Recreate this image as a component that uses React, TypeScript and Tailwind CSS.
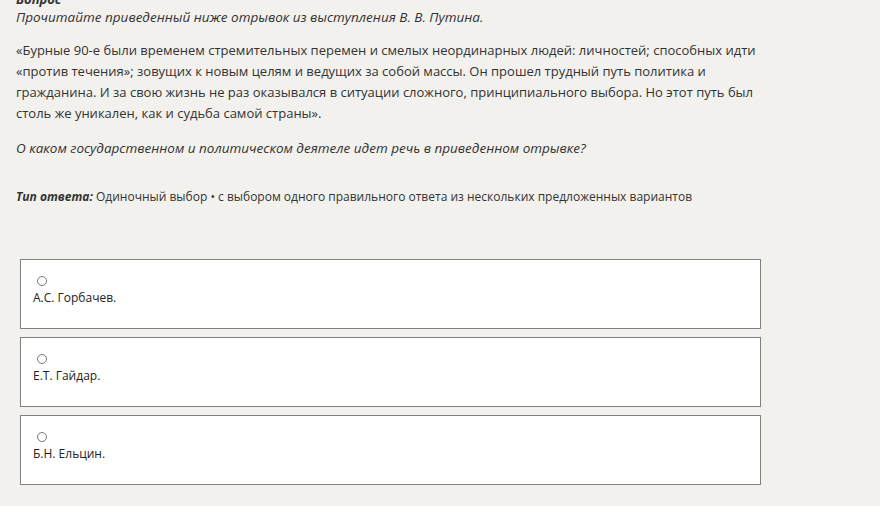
const options = ["А.С. Горбачев.", "Е.Т. Гайдар.", "Б.Н. Ельцин."];

export default function App() {
  return (
    <div
      className="w-[880px] h-[506px] overflow-hidden bg-[#f2f1ee] text-[#333333] text-[13px] leading-[21px]"
      style={{ fontFamily: '"Open Sans", "Noto Sans", sans-serif' }}
    >
      <div className="pl-[16px] -mt-[11px]">
        <div className="italic font-bold">Вопрос</div>
        <div className="italic text-[13.5px] mt-[-3px]">
          Прочитайте приведенный ниже отрывок из выступления В. В. Путина.
        </div>

        <p className="mt-[12px] w-[750px]">
          «Бурные 90-е были временем стремительных перемен и смелых неординарных
          людей: личностей; способных идти «против течения»; зовущих к новым
          целям и ведущих за собой массы. Он прошел трудный путь политика и
          гражданина. И за свою жизнь не раз оказывался в ситуации сложного,
          принципиального выбора. Но этот путь был столь же уникален, как и
          судьба самой страны».
        </p>

        <p className="mt-[14px] italic text-[13.5px]">
          О каком государственном и политическом деятеле идет речь в
          приведенном отрывке?
        </p>

        <p className="mt-[27px] text-[12px]">
          <span className="italic font-bold">Тип ответа:</span> Одиночный выбор
          • с выбором одного правильного ответа из нескольких предложенных
          вариантов
        </p>
      </div>

      <div className="ml-[20px] mt-[52px] w-[741px] flex flex-col gap-[8px]">
        {options.map((o) => (
          <div
            key={o}
            className="h-[70px] bg-white border border-[#808080] pl-[12px] pt-[16px] text-[12px]"
          >
            <div className="ml-[4px] w-[10px] h-[10px] rounded-full border border-[#777777] bg-white" />
            <div className="mt-[1px] text-[#222222]">{o}</div>
          </div>
        ))}
      </div>
    </div>
  );
}
